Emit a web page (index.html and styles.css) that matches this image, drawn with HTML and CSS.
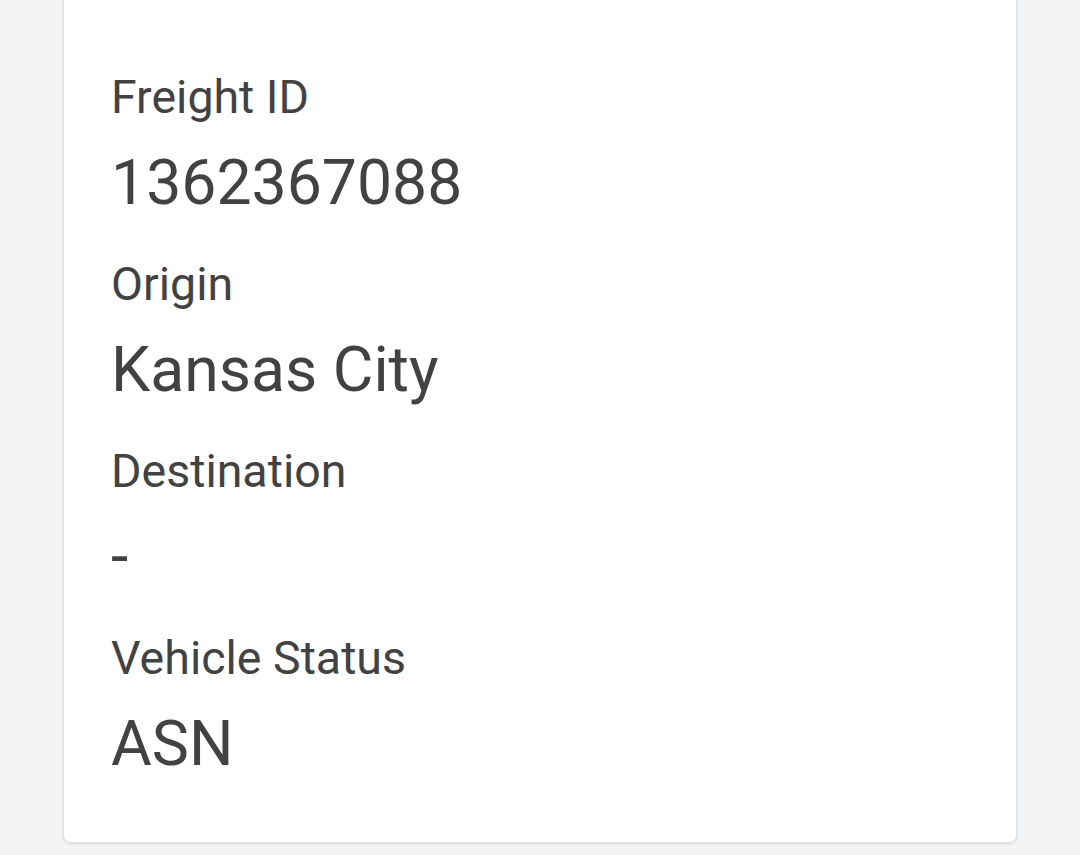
FILE: index.html
```html
<!DOCTYPE html>
<html lang="en">
<head>
  <meta charset="UTF-8">
  <meta name="viewport" content="width=device-width, initial-scale=1.0">
  <title>Freight details</title>
  <link rel="stylesheet" href="styles.css">
</head>
<body>
  <div class="page">
    <div class="detail-card">
      <div class="field">
        <div class="field-label">Freight ID</div>
        <div class="field-value">1362367088</div>
      </div>
      <div class="field">
        <div class="field-label">Origin</div>
        <div class="field-value">Kansas City</div>
      </div>
      <div class="field">
        <div class="field-label">Destination</div>
        <div class="field-value">-</div>
      </div>
      <div class="field">
        <div class="field-label">Vehicle Status</div>
        <div class="field-value">ASN</div>
      </div>
    </div>
  </div>
</body>
</html>
```

FILE: styles.css
```css
body {
  margin: 0;
  background-color: #f2f4f6;
  font-family: Roboto, "Noto Sans", Arial, sans-serif;
  color: #424242;
}

.page {
  padding: 0 62px 12px;
}

.detail-card {
  background-color: #ffffff;
  border: 2px solid #e1e4e7;
  border-top: none;
  border-radius: 0 0 9px 9px;
  box-shadow: 0 1px 2px rgba(0, 0, 0, 0.06);
  padding: 69px 47px 58px;
  display: flex;
  flex-direction: column;
  gap: 33px;
}

.field {
  display: flex;
  flex-direction: column;
  gap: 18px;
}

.field-label {
  font-size: 46.5px;
  line-height: 56px;
}

.field-value {
  font-size: 62.5px;
  line-height: 80px;
}
```
